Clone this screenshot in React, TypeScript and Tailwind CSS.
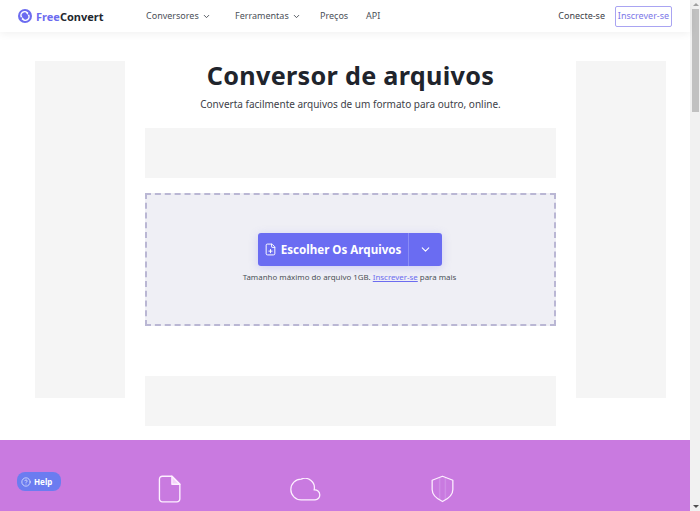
import { ChevronDown, FilePlus, HelpCircle } from "lucide-react";

const SANS = "font-['Noto_Sans','Liberation_Sans',sans-serif]";

function Logo() {
  return (
    <svg width="14" height="14" viewBox="0 0 14 14">
      <circle cx="7" cy="7" r="7" fill="#6c6cf0" />
      <path d="M3.6 8.2A3.5 3.5 0 0 1 9.4 4.2" fill="none" stroke="#fff" strokeWidth="1.5" />
      <path d="M10.4 5.8A3.5 3.5 0 0 1 4.6 9.8" fill="none" stroke="#fff" strokeWidth="1.5" />
      <path d="M8 3l2.4 0.4L9.6 6z M6 11l-2.4-0.4L4.4 8z" fill="#fff" />
    </svg>
  );
}

function FileIcon() {
  return (
    <svg width="23" height="28" viewBox="0 0 24 29" fill="none" stroke="#fdf0ff" strokeWidth="1.4" strokeLinejoin="round">
      <path d="M4.5 1.2H14.5L22.8 9.5V25a3 3 0 0 1-3 3H4.5a3 3 0 0 1-3-3V4.2a3 3 0 0 1 3-3z" />
      <path d="M14.5 1.2V9.5H22.8z" fill="#f3d3f8" />
    </svg>
  );
}

function CloudIcon() {
  return (
    <svg width="31" height="23" viewBox="0 0 32 24" fill="none" stroke="#fdf0ff" strokeWidth="1.3" strokeLinejoin="round">
      <path d="M11.5 22.8H26a5 5 0 0 0 4.9-5.4 5.2 5.2 0 0 0-5.9-5A9.8 9.8 0 0 0 11.5 1.2a10.8 10.8 0 0 0 0 21.6z" />
    </svg>
  );
}

function ShieldIcon() {
  return (
    <svg width="23" height="28" viewBox="0 0 24 29" fill="none">
      <path d="M9 3v23M15 3v23" stroke="#d08ee6" strokeWidth="1.5" />
      <path d="M12 1.2L22.8 5.4V15C22.8 21.5 17 25.2 12 27.6C7 25.2 1.2 21.5 1.2 15V5.4z" stroke="#fdf0ff" strokeWidth="1.3" strokeLinejoin="round" />
    </svg>
  );
}

function NavItem({ label, menu }: { label: string; menu?: boolean }) {
  return (
    <span className="flex items-center gap-[3px] text-[9px] text-[#4b5058]">
      {label}
      {menu && <ChevronDown size={9} strokeWidth={2.5} />}
    </span>
  );
}

function Header() {
  return (
    <header className="h-[32px] shrink-0 flex items-center bg-white pl-[18px] pr-[18px] shadow-[0_2px_8px_rgba(0,0,0,0.06)] relative">
      <Logo />
      <span className="ml-[4px] w-[67px] text-[11px] font-bold leading-none">
        <span className="text-[#6c6cf0]">Free</span>
        <span className="text-[#23272e]">Convert</span>
      </span>
      <nav className="ml-[43px] flex items-center">
        <div className="w-[89px]">
          <NavItem label="Conversores" menu />
        </div>
        <div className="w-[85px]">
          <NavItem label="Ferramentas" menu />
        </div>
        <div className="w-[46px]">
          <NavItem label="Preços" />
        </div>
        <NavItem label="API" />
      </nav>
      <div className="ml-auto flex items-center gap-[10px]">
        <span className="text-[9px] text-[#3d4148]">Conecte-se</span>
        <span className="h-[21px] w-[57px] flex items-center justify-center rounded-[2px] border border-[#a9a4f2] text-[9px] whitespace-nowrap text-[#7d78e8]">
          Inscrever-se
        </span>
      </div>
    </header>
  );
}

function UploadBox() {
  return (
    <div className="mt-[15px] h-[133px] border-2 border-dashed border-[#bab7d4] bg-[#efeff5] flex flex-col items-center pt-[38px] pr-[2px]">
      <div className="flex h-[33px] rounded-[3px] bg-[#6a6cf2] text-white shadow-[0_2px_10px_rgba(106,108,242,0.25)]">
        <div className="w-[151px] flex items-center justify-center gap-[4px] border-r border-[#8a8cf6]">
          <FilePlus size={13} strokeWidth={1.8} />
          <span className="text-[11.6px] font-bold">Escolher Os Arquivos</span>
        </div>
        <div className="w-[33px] flex items-center justify-center">
          <ChevronDown size={13} />
        </div>
      </div>
      <p className="mt-[5px] text-[7.9px] leading-[12px] text-[#4b5058]">
        Tamanho máximo do arquivo 1GB.{" "}
        <span className="text-[#6c6cf0] underline">Inscrever-se</span> para mais
      </p>
    </div>
  );
}

function Scrollbar() {
  return (
    <div className="w-[10px] shrink-0 bg-[#f1f1f1] flex flex-col items-center pl-[2px] pr-[1px]">
      <div className="h-[9px] flex items-center">
        <div className="border-x-[3px] border-b-[3px] border-x-transparent border-b-[#a0a0a0]" />
      </div>
      <div className="w-full h-[103px] bg-[#c1c1c1]" />
      <div className="mt-auto h-[9px] flex items-center">
        <div className="border-x-[3px] border-t-[3px] border-x-transparent border-t-[#505050]" />
      </div>
    </div>
  );
}

export default function App() {
  return (
    <div className={`${SANS} relative flex w-[700px] h-[511px] overflow-hidden bg-white`}>
      <div className="flex-1 min-w-0 flex flex-col">
        <Header />
        <main className="h-[408px] shrink-0 pt-[29px] pl-[35px] flex items-start">
          <div className="w-[90px] h-[337px] bg-[#f5f5f5]" />
          <section className="ml-[20px] w-[411px]">
            <h1 className="-mt-[2px] text-center text-[25.2px] leading-[32px] font-bold tracking-[0.3px] text-[#20242c]">
              Conversor de arquivos
            </h1>
            <p className="mt-[5px] text-center text-[10px] leading-[16px] text-[#3d4148]">
              Converta facilmente arquivos de um formato para outro, online.
            </p>
            <div className="mt-[16px] h-[50px] bg-[#f5f5f5]" />
            <UploadBox />
            <div className="mt-[50px] h-[50px] bg-[#f5f5f5]" />
          </section>
          <div className="ml-[20px] w-[90px] h-[337px] bg-[#f5f5f5]" />
        </main>
        <div className="flex-1 bg-[#c97ae0] flex items-start pt-[35px]">
          <div className="ml-[158px]">
            <FileIcon />
          </div>
          <div className="ml-[109px] mt-[3px]">
            <CloudIcon />
          </div>
          <div className="ml-[110px]">
            <ShieldIcon />
          </div>
        </div>
      </div>
      <Scrollbar />
      <div className="absolute left-[17px] top-[472px] h-[19px] w-[44px] rounded-[8px] bg-[#6b7cf0] flex items-center gap-[3px] pl-[4px] text-white">
        <HelpCircle size={10} strokeWidth={1.5} />
        <span className="text-[8px] font-bold">Help</span>
      </div>
    </div>
  );
}
